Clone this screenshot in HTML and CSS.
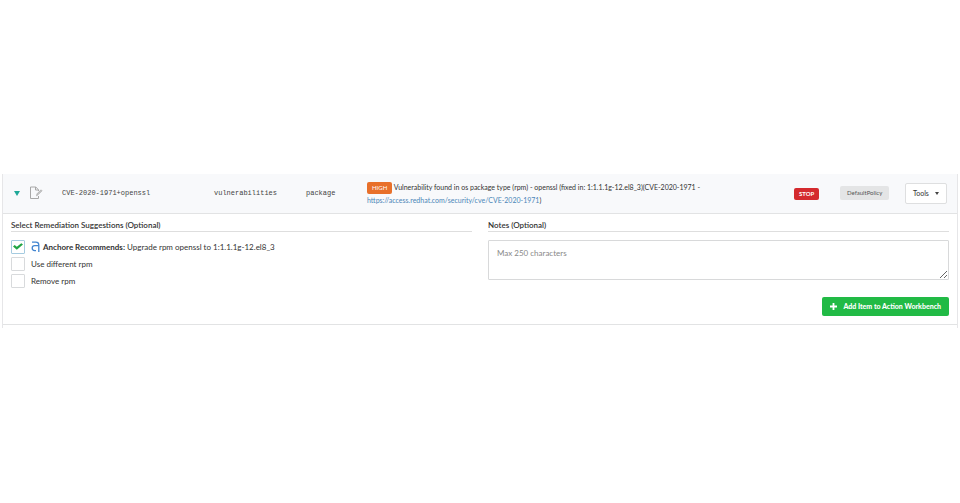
FILE: index.html
```html
<!DOCTYPE html>
<html lang="en">
<head>
    <meta charset="UTF-8">
    <meta name="viewport" content="width=device-width, initial-scale=1.0">
    <title>Policy Compliance</title>
    <link rel="stylesheet" href="styles.css">
</head>
<body>
    <main class="results">
        <table class="findings">
            <colgroup>
                <col class="col-toggle">
                <col class="col-edit">
                <col class="col-trigger">
                <col class="col-gate">
                <col class="col-type">
                <col>
                <col class="col-action">
                <col class="col-policy">
                <col class="col-tools">
            </colgroup>
            <tbody>
                <tr class="finding">
                    <td class="toggle-cell">
                        <button class="toggle" type="button" aria-label="Collapse row" aria-expanded="true">
                            <svg width="6" height="5" viewBox="0 0 6 5"><path d="M0 0h6L3 5z" fill="#1fa898"/></svg>
                        </button>
                    </td>
                    <td>
                        <button class="edit" type="button" aria-label="Edit item">
                            <svg width="14" height="14" viewBox="0 0 14 14" fill="none" stroke="#a8a8a8" stroke-linejoin="round">
                                <path d="M9.5 5V3.8L6.8 1H1.5v11.5h8V10"/>
                                <path d="M6.5 1v3h3"/>
                                <path d="M7.5 9.8l.5-2 4-4 1 1-4 4z" fill="#c8c8c8" stroke-width=".7"/>
                            </svg>
                        </button>
                    </td>
                    <td class="code">CVE-2020-1971+openssl</td>
                    <td class="code">vulnerabilities</td>
                    <td class="code">package</td>
                    <td>
                        <span class="label label-high">HIGH</span>
                        Vulnerability found in os package type (rpm) - openssl (fixed in: 1:1.1.1g-12.el8_3)(CVE-2020-1971 -
                        <span class="nowrap"><a href="https://access.redhat.com/security/cve/CVE-2020-1971">https://access.redhat.com/security/cve/CVE-2020-1971</a>)</span>
                    </td>
                    <td><span class="label label-stop">STOP</span></td>
                    <td><span class="label label-policy">DefaultPolicy</span></td>
                    <td>
                        <button class="tools" type="button">
                            Tools
                            <svg width="4" height="3" viewBox="0 0 4 3"><path d="M0 0h4L2 3z" fill="#444"/></svg>
                        </button>
                    </td>
                </tr>
                <tr>
                    <td colspan="9">
                        <form class="details">
                            <fieldset class="suggestions">
                                <legend class="heading">Select Remediation Suggestions (Optional)</legend>
                                <label class="option">
                                    <input type="checkbox" checked>
                                    <svg class="anchore" width="9" height="12" viewBox="0 0 9 12" fill="none" stroke="#4285d0" stroke-width="1.3">
                                        <path d="M1 1.2h3.8Q7.8 1.2 7.8 4v7"/>
                                        <path d="M7.8 4.6H3.7a2.5 2.5 0 0 0 0 5h1.3"/>
                                    </svg>
                                    <span><b>Anchore Recommends:</b> Upgrade rpm openssl to 1:1.1.1g-12.el8_3</span>
                                </label>
                                <label class="option">
                                    <input type="checkbox">
                                    <span>Use different rpm</span>
                                </label>
                                <label class="option">
                                    <input type="checkbox">
                                    <span>Remove rpm</span>
                                </label>
                            </fieldset>
                            <div class="notes">
                                <label class="heading" for="notes">Notes (Optional)</label>
                                <textarea id="notes" maxlength="250" placeholder="Max 250 characters"></textarea>
                                <button class="add" type="button">
                                    <svg width="7" height="7" viewBox="0 0 7 7"><path d="M3.5 0v7M0 3.5h7" stroke="#fff" stroke-width="1.8"/></svg>
                                    Add Item to Action Workbench
                                </button>
                            </div>
                        </form>
                    </td>
                </tr>
            </tbody>
        </table>
    </main>
</body>
</html>
```

FILE: styles.css
```css
* {
    box-sizing: border-box;
}
body {
    margin: 0;
    background-color: #fff;
    color: #333;
    font-family: Lato, sans-serif;
    font-size: 7px;
    line-height: 12px;
}
button, textarea {
    font: inherit;
    color: inherit;
}
svg {
    display: block;
    flex: none;
}
a {
    color: #4b86b8;
    text-decoration: none;
}
.results {
    margin: 174px 2px 0;
    padding-bottom: 3px;
    border: solid #e6e6e8;
    border-width: 0 1px;
}

/* table */
.findings {
    width: 100%;
    table-layout: fixed;
    border-collapse: collapse;
}
.findings td {
    padding: 0;
    border-bottom: 1px solid #e2e3e4;
}
.finding {
    height: 39px;
    background-color: #f8f9fb;
}
.col-toggle { width: 26px; }
.col-edit { width: 33px; }
.col-trigger { width: 152px; }
.col-gate { width: 92px; }
.col-type { width: 61px; }
.col-action { width: 46px; }
.col-policy { width: 65px; }
.col-tools { width: 52px; }
.findings .toggle-cell {
    padding-left: 11px;
}
.toggle, .edit {
    display: block;
    padding: 0;
    border: none;
    background: none;
    cursor: pointer;
}
.code {
    font-family: "Liberation Mono", monospace;
    color: #444;
}
.nowrap {
    white-space: nowrap;
}
.label {
    display: inline-block;
    padding: 0 5px;
    border-radius: 2px;
    color: #fff;
    font-size: 6px;
    vertical-align: middle;
}
.label-high {
    background-color: #e8702a;
}
.label-stop {
    background-color: #d42a2e;
    font-weight: bold;
}
.label-policy {
    padding: 1px 7px;
    background-color: #e4e5e6;
    color: #555;
}
.tools {
    display: flex;
    align-items: center;
    justify-content: space-between;
    width: 42px;
    height: 21px;
    padding: 0 7px;
    border: 1px solid #dedfe0;
    border-radius: 2px;
    background-color: #fff;
    cursor: pointer;
}

/* expanded row */
.details {
    display: grid;
    grid-template-columns: 1fr 1fr;
    gap: 16px;
    padding: 5px 8px 8px;
}
.suggestions {
    min-width: 0;
    margin: 0;
    padding: 0;
    border: none;
}
.heading {
    display: block;
    width: 100%;
    margin-bottom: 8px;
    padding: 0;
    border-bottom: 1px solid #dedede;
    font-size: 8px;
    font-weight: 600;
}
.option {
    display: flex;
    align-items: center;
    height: 14px;
    margin-bottom: 3px;
    font-size: 8px;
}
.option input {
    display: grid;
    place-content: center;
    appearance: none;
    width: 14px;
    height: 14px;
    margin: 0 6px 0 0;
    border: 1px solid #d8dadc;
    border-radius: 1px;
    background-color: #fff;
}
.option input:checked {
    border-color: #a5cbe0;
}
.option input:checked::before {
    content: "";
    width: 10px;
    height: 8px;
    background-color: #21a544;
    clip-path: polygon(0 50%, 17% 32%, 38% 54%, 83% 8%, 100% 26%, 38% 90%);
}
.anchore {
    margin-right: 3px;
}
.notes {
    display: flex;
    flex-direction: column;
    align-items: flex-end;
}
textarea {
    width: 100%;
    height: 40px;
    margin: 0 0 17px;
    padding: 6px 8px;
    border: 1px solid #d8d9da;
    border-radius: 1px;
    font-size: 8px;
    resize: vertical;
}
textarea::placeholder {
    color: #888;
}
.add {
    display: flex;
    align-items: center;
    gap: 6px;
    height: 19px;
    padding: 0 8px;
    border: none;
    border-radius: 2px;
    background-color: #21ba45;
    color: #fff;
    font-weight: 900;
    cursor: pointer;
}
```
